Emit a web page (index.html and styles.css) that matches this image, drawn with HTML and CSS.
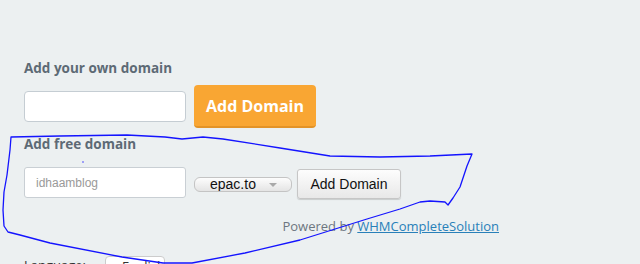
FILE: index.html
```html
<!DOCTYPE html>
<html lang="en">
<head>
    <meta charset="UTF-8">
    <meta name="viewport" content="width=device-width, initial-scale=1.0">
    <title>Domain</title>
    <link rel="stylesheet" href="styles.css">
</head>
<body>

    <div class="page">
        <!-- own domain -->
        <h3 class="section-title">Add your own domain</h3>
        <div class="own-row">
            <input type="text" class="own-input">
            <button class="btn-orange">Add Domain</button>
        </div>

        <!-- free domain -->
        <h3 class="section-title free-title">Add free domain</h3>
        <div class="free-row">
            <input type="text" class="free-input" placeholder="idhaamblog">
            <span class="select-wrap">
                <select class="tld-select">
                    <option>epac.to</option>
                </select>
            </span>
            <button class="btn-grey">Add Domain</button>
        </div>

        <div class="powered">Powered by <a href="#">WHMCompleteSolution</a></div>

        <div class="language">
            <span class="language-label">Language:</span>
            <span class="language-box">English</span>
        </div>
    </div>

    <!-- hand drawn marker round the free domain part -->
    <svg class="scribble" width="640" height="264" viewBox="0 0 640 264">
        <path d="M11 137 L60 136 L127 135 L165 137 L182 139 L203 137 L223 139 L280 148 L330 156 L380 157 L430 156 L472 154 L467 166 L460 187 L453 198 L448 205 L445 202 L430 201 L420 202 L400 209 L367 219 L300 240 L245 253 L192 263 L163 263 L122 257 L50 243 L20 235 L8 232 L4 226 L3 210 L4 192 L7 175 L10 150 Z" />
        <circle cx="83" cy="162" r="0.7" />
    </svg>

</body>
</html>
```

FILE: styles.css
```css
body {
    margin: 0;
    background-color: #ecf0f1;
    font-family: "Open Sans", Arial, sans-serif;
    overflow: hidden;
    height: 264px;
}
.page {
    width: 475px;
    padding: 59px 0 0 24px;
}
.section-title {
    margin: 0 0 8px;
    font-size: 13.5px;
    line-height: 18px;
    font-weight: 700;
    color: #5d6a75;
}
.free-title {
    margin-top: 7px;
    margin-bottom: 14px;
}
.own-row {
    display: flex;
    align-items: center;
    gap: 8px;
    height: 43px;
}
.own-input {
    box-sizing: border-box;
    width: 162px;
    height: 31px;
    margin: 0;
    border: 1px solid #c5cdd3;
    border-radius: 4px;
    background-color: #fff;
}
.btn-orange {
    box-sizing: border-box;
    width: 122px;
    height: 43px;
    border: none;
    border-bottom: 2px solid #e39327;
    border-radius: 4px;
    background-color: #f9a633;
    color: #fff;
    font-family: "Open Sans", Arial, sans-serif;
    font-size: 16px;
    font-weight: 700;
    cursor: pointer;
}
.free-row {
    display: flex;
    align-items: flex-start;
}
.free-input {
    box-sizing: border-box;
    width: 162px;
    height: 31px;
    margin: 0;
    padding: 0 11px;
    border: 1px solid #c9cfd4;
    border-radius: 3px;
    background-color: #fff;
    font-family: "Liberation Sans", Arial, sans-serif;
    font-size: 12px;
}
.free-input::placeholder {
    color: #999;
}
.select-wrap {
    position: relative;
    margin: 10px 0 0 8px;
}
.select-wrap::after {
    content: "";
    position: absolute;
    right: 15px;
    top: 6px;
    border-left: 4px solid transparent;
    border-right: 4px solid transparent;
    border-top: 4px solid #a9a9a9;
}
.tld-select {
    appearance: none;
    -webkit-appearance: none;
    box-sizing: border-box;
    display: block;
    width: 98px;
    height: 15px;
    margin: 0;
    padding: 0 0 0 15px;
    border: 1px solid #c4c4c4;
    border-radius: 6px;
    background: linear-gradient(#fdfdfd, #e4e4e4);
    color: #111;
    font-family: "Liberation Sans", Arial, sans-serif;
    font-size: 14px;
    line-height: 13px;
}
.btn-grey {
    box-sizing: border-box;
    width: 104px;
    height: 30px;
    margin: 2px 0 0 5px;
    border: 1px solid #c6c6c6;
    border-radius: 3px;
    background: linear-gradient(#fdfdfd, #e8e8e8);
    box-shadow: 0 1px 1px rgba(0, 0, 0, 0.15);
    color: #111;
    font-family: "Liberation Sans", Arial, sans-serif;
    font-size: 14px;
    cursor: pointer;
}
.powered {
    margin-top: 18px;
    text-align: right;
    font-size: 13px;
    line-height: 18px;
    color: #6d7680;
}
.powered a {
    color: #2980b9;
}
.language {
    display: flex;
    align-items: flex-start;
    margin-top: 21px;
    font-size: 13px;
    line-height: 18px;
    color: #333;
}
.language-label {
    width: 81px;
}
.language-box {
    box-sizing: border-box;
    width: 60px;
    height: 22px;
    padding-left: 16px;
    border: 1px solid #ccc;
    border-radius: 4px;
    background-color: #fff;
}
.scribble {
    position: absolute;
    left: 0;
    top: 0;
    pointer-events: none;
}
.scribble path {
    fill: none;
    stroke: #1414ff;
    stroke-width: 1.3;
    stroke-linejoin: round;
}
.scribble circle {
    fill: #1414ff;
}
```
